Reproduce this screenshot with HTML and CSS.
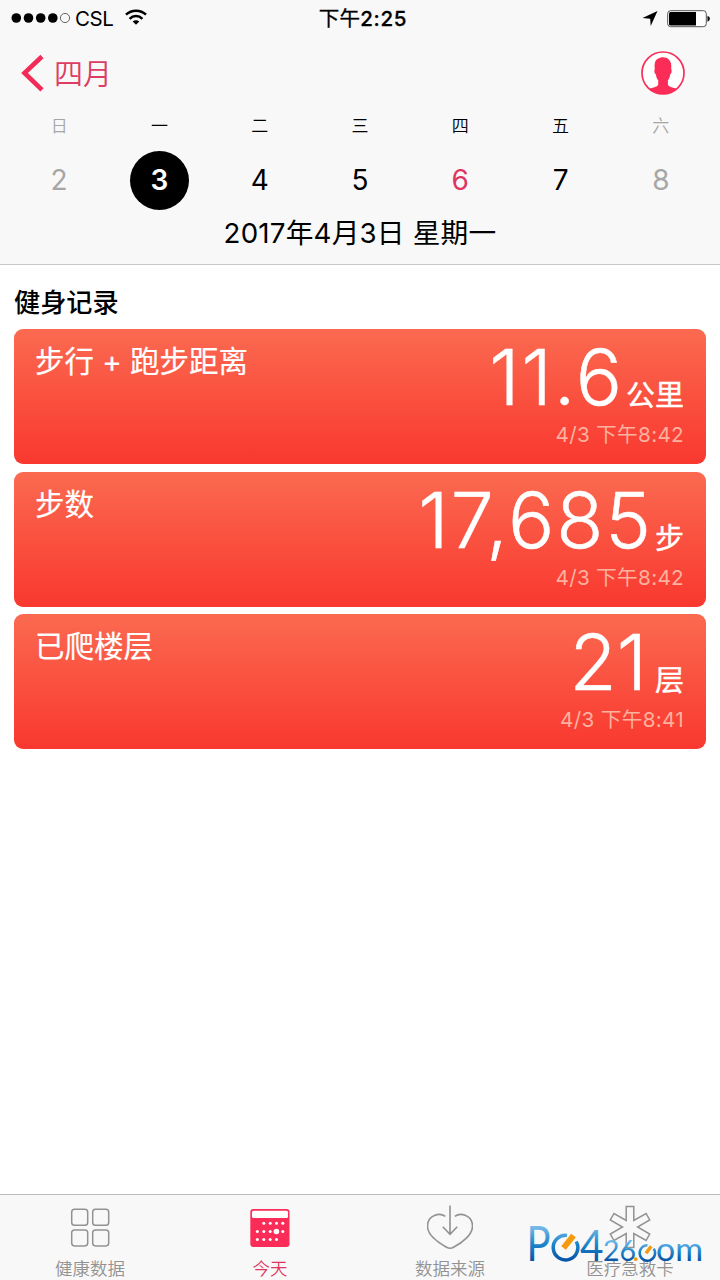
FILE: index.html
```html
<!DOCTYPE html>
<html lang="zh-CN">
<head>
<meta charset="utf-8">
<title>健康</title>
<link rel="stylesheet" href="styles.css">
</head>
<body>
<div class="screen">
  <header class="header">
    <div class="status">
      <div class="status-left">
        <svg class="signal" width="60" height="12" viewBox="0 0 60 12"><circle cx="5.3" cy="5" r="4.8"/><circle cx="17.5" cy="5" r="4.8"/><circle cx="29.7" cy="5" r="4.8"/><circle cx="41.8" cy="5" r="4.8"/><circle cx="54" cy="5" r="4.6" fill="none" stroke="#444" stroke-width=".8"/></svg>
        <span class="carrier">CSL</span>
        <svg class="wifi" width="22" height="17" viewBox="0 0 22 17" fill="none" stroke="#000" stroke-width="2.5"><path d="M1 5.7C6.5.3 15.500.3 21 5.700M4.600 9.800c3.600-3.600 9.200-3.600 12.800 0"/><path d="M11 15.700 7.700 12.400c1.800-1.700 4.800-1.700 6.600 0z" fill="#000" stroke="none"/></svg>
      </div>
      <span class="clock">下午<b>2:25</b></span>
      <div class="status-right">
        <svg width="16" height="16" viewBox="0 0 16 16"><path d="M15.500 0 8.700 15 8.200 7.800.5 7z"/></svg>
        <svg width="43" height="18" viewBox="0 0 43 18"><rect x=".7" y=".7" width="38.600" height="16" rx="3" fill="#fff" stroke="#555"/><path d="M3.500 2H29v13.500H3.500Q2 15.500 2 14V3.500Q2 2 3.500 2z"/><path d="M40.500 5.700q2.400 1 2.400 3t-2.400 3z"/></svg>
      </div>
    </div>
    <nav class="nav">
      <a class="back">
        <svg width="24" height="38" viewBox="0 0 24 38" fill="none" stroke="#f22b59" stroke-width="4.600"><path d="M22 2.500 4.500 19 22 35.800"/></svg>
        <span>四月</span>
      </a>
      <svg width="44" height="44" viewBox="0 0 44 44"><circle cx="22" cy="22" r="21" fill="#fff" stroke="#f62f59" stroke-width="1.700"/><path fill="#fb2d58" d="M8.200 38.300c2.500-2.100 8.200-1.800 9-4.800v-4.200c-1.500-1.600-2-3.700-2.300-6-1.600-.7-1.900-4.500-1.100-5.400-.9-6.500 1.200-10.300 4.400-10.700 3.200-1.900 13.500-1.700 12 10.700.9 1.100.4 4.700-1 5.400-.3 2.500-.9 4.500-2.300 6v4.200c.8 3 6.300 2.700 8.900 4.800Q30.500 43 22 43T8.200 38.300z"/></svg>
    </nav>
    <div class="week names">
      <span class="dim">日</span><span>一</span><span>二</span><span>三</span><span>四</span><span>五</span><span class="dim">六</span>
    </div>
    <div class="week days">
      <span class="dim">2</span><span class="selected">3</span><span>4</span><span>5</span><span class="today">6</span><span>7</span><span class="dim">8</span>
    </div>
    <div class="date">2017年4月3日 星期一</div>
  </header>

  <main class="content">
    <h1 class="title">健身记录</h1>
    <section class="card">
      <h2 class="label">步行 + 跑步距离</h2>
      <div class="reading">
        <div class="amount"><span class="value">11.6</span><span class="unit">公里</span></div>
        <div class="time">4/3 下午8:42</div>
      </div>
    </section>
    <section class="card">
      <h2 class="label">步数</h2>
      <div class="reading">
        <div class="amount"><span class="value">17,685</span><span class="unit">步</span></div>
        <div class="time">4/3 下午8:42</div>
      </div>
    </section>
    <section class="card">
      <h2 class="label">已爬楼层</h2>
      <div class="reading">
        <div class="amount"><span class="value tight">21</span><span class="unit">层</span></div>
        <div class="time">4/3 下午8:41</div>
      </div>
    </section>
  </main>

  <footer class="tabs">
    <a class="tab">
      <svg width="46" height="46" viewBox="0 0 46 46" fill="none" stroke="#929292" stroke-width="1.500"><rect x="4.700" y="5.200" width="16" height="16" rx="2.800"/><rect x="25.700" y="5.200" width="16" height="16" rx="2.800"/><rect x="4.700" y="25.900" width="16" height="16" rx="2.800"/><rect x="25.700" y="25.900" width="16" height="16" rx="2.800"/></svg>
      <span>健康数据</span>
    </a>
    <a class="tab active">
      <svg width="46" height="46" viewBox="0 0 46 46"><rect x="3.300" y="5" width="39.200" height="38" rx="3" fill="#fb2d58"/><rect x="5" y="6.700" width="36" height="7.400" rx="1.500" fill="#fff"/><g fill="#fff"><circle cx="16.800" cy="19.300" r="1.500"/><circle cx="23.200" cy="19.300" r="1.500"/><circle cx="29.500" cy="19.300" r="1.500"/><circle cx="35.800" cy="19.300" r="1.500"/><circle cx="10.300" cy="27.500" r="1.500"/><circle cx="16.800" cy="27.500" r="1.500"/><circle cx="23.200" cy="27.500" r="1.500"/><circle cx="29.400" cy="27.500" r="2.800"/><circle cx="35.800" cy="27.500" r="1.500"/><circle cx="10.300" cy="35.500" r="1.500"/><circle cx="16.800" cy="35.500" r="1.500"/><circle cx="23.200" cy="35.500" r="1.500"/><circle cx="29.500" cy="35.500" r="1.500"/></g></svg>
      <span>今天</span>
    </a>
    <a class="tab">
      <svg width="46" height="46" viewBox="0 0 46 46" fill="none" stroke="#929292" stroke-width="1.600"><path d="M18.300 12.300C13 8.500.5 10.500.5 22.300.5 30.500 11 38.500 19.500 43.200q3.700 2 7 0C35.500 38.500 45.500 30.500 45.500 22.300c0-11.800-12.300-13.800-17.700-10M23 1.500v29M15.800 22.700l7.200 7.600 7.200-7.600"/></svg>
      <span>数据来源</span>
    </a>
    <a class="tab">
      <svg width="46" height="46" viewBox="0 0 46 46" fill="none" stroke="#929292" stroke-width="1.500"><path d="M19.200 2.500h7.600v14l12.300-7 3.600 6.500-12.100 7 12.100 7-3.600 6.500-12.300-7v14h-7.600v-14l-12.200 7-3.700-6.500 12.200-7-12.200-7L7 9.500l12.200 7z"/></svg>
      <span>医疗急救卡</span>
    </a>
    <svg class="watermark" width="180" height="44" viewBox="526 1222 180 44">
      <defs>
        <linearGradient id="tall" gradientUnits="userSpaceOnUse" x1="0" y1="1226" x2="0" y2="1261"><stop stop-color="#7dbce9"/><stop offset=".5" stop-color="#1d87cb"/><stop offset="1" stop-color="#0752a5"/></linearGradient>
        <linearGradient id="short" gradientUnits="userSpaceOnUse" x1="0" y1="1241" x2="0" y2="1261"><stop stop-color="#6fb9ec"/><stop offset=".5" stop-color="#2387ca"/><stop offset="1" stop-color="#0752a5"/></linearGradient>
      </defs>
      <g fill="url(#tall)" class="mark-text">
        <text x="526.500" y="1261" font-size="48" textLength="24" lengthAdjust="spacingAndGlyphs">P</text>
        <text x="580" y="1261" font-size="43" textLength="23.500" lengthAdjust="spacingAndGlyphs">4</text>
      </g>
      <g fill="url(#short)" class="mark-text">
        <text x="603" y="1261" font-size="29" textLength="33" lengthAdjust="spacingAndGlyphs">26</text>
        <text x="656" y="1261" font-size="32" textLength="47" lengthAdjust="spacingAndGlyphs">om</text>
      </g>
      <text x="633" y="1261" font-size="24" fill="#f59a0c" class="mark-text dot">.</text>
      <path d="M567 1235.400a12.300 12.300 0 1 0 9.200 6.100" fill="none" stroke="url(#tall)" stroke-width="3.500"/>
      <path d="M563.500 1248l10-12.500" stroke="#f59a0c" stroke-width="6"/>
      <path d="M647.500 1245.300a7.700 7.700 0 1 0 6.200 3.300" fill="none" stroke="url(#short)" stroke-width="2.500"/>
      <path d="M646 1253.200l5.200-7" stroke="#f59a0c" stroke-width="3.500"/>
    </svg>
  </footer>
</div>
</body>
</html>
```
FILE: styles.css
```css
* { box-sizing: border-box; }
body { margin: 0; background: #fff; color: #000; font-family: Inter, "Noto Sans CJK SC", sans-serif; }
svg { display: block; flex: none; }
.screen { width: 720px; height: 1280px; display: flex; flex-direction: column; overflow: hidden; }

.header { height: 265px; background: #f8f8f8; border-bottom: 1px solid #c8c8c8; }
.status { height: 37px; display: grid; grid-template-columns: 1fr auto 1fr; align-items: center; padding: 1px 10px 0 11px; }
.status-left { display: flex; align-items: center; }
.carrier { width: 38px; margin-left: 4px; font-size: 20.500px; line-height: 36px; letter-spacing: -.4px; }
.wifi { margin-left: 12px; margin-top: -3px; }
.clock { font-size: 20.500px; line-height: 36px; font-weight: 400; letter-spacing: .2px; padding-left: 5px; -webkit-text-stroke: .3px #000; }
.clock b { font-weight: 500; letter-spacing: .7px; }
.status-right { display: flex; align-items: center; justify-content: flex-end; gap: 9px; }

.nav { height: 73px; display: flex; align-items: center; justify-content: space-between; padding: 0 35px 2px 20px; }
.back { display: flex; align-items: center; gap: 10px; color: #dd3c63; font-size: 29px; line-height: 40px; }
.back span { padding-top: 4px; font-weight: 350; }

.week { display: grid; grid-template-columns: repeat(7, 1fr); justify-items: center; align-items: center; padding: 0 9px; }
.names { height: 32px; font-size: 17px; line-height: 32px; font-weight: 350; }
.days { height: 76px; font-size: 28px; line-height: 59px; }
.dim { color: #a6a6a6; }
.today { color: #de3560; }
.selected { width: 59px; height: 59px; border-radius: 50%; background: #000; color: #fff; text-align: center; font-weight: 600; }
.date { height: 40px; margin-top: -5px; line-height: 40px; font-size: 27.700px; letter-spacing: .2px; font-weight: 370; text-align: center; }

.content { flex: 1; padding: 19px 14px 0; }
.title { margin: 0 0 9px; height: 36px; line-height: 38px; font-size: 26.200px; font-weight: 500; }
.card { height: 135px; margin-bottom: 7.500px; border-radius: 9px; padding: 0 22px 0 21px; display: flex; justify-content: space-between; color: #fff; background: linear-gradient(#fb6a50, #f9382f); }
.label { margin: 12px 0 0; height: 40px; line-height: 40px; font-size: 29.500px; font-weight: 400; -webkit-text-stroke: .2px #fff; }
.reading { text-align: right; }
.amount { height: 90px; line-height: 97px; white-space: nowrap; }
.value { font-size: 77px; font-weight: 300; letter-spacing: 2px; -webkit-text-stroke: .5px #fff; }
.value.tight { letter-spacing: 0; margin-right: 6px; }
.unit { display: inline-block; margin-left: 2px; font-size: 29px; line-height: 40px; font-weight: 400; -webkit-text-stroke: .4px #fff; vertical-align: -1px; }
.time { height: 30px; line-height: 32px; font-size: 20.700px; font-weight: 370; color: #fdb19f; letter-spacing: .3px; }

.tabs { position: relative; height: 86px; display: grid; grid-template-columns: repeat(4, 1fr); background: #f8f8f8; border-top: 1px solid #bcbcbc; }
.tab { display: flex; flex-direction: column; align-items: center; padding-top: 9px; font-size: 17.500px; line-height: 26px; color: #929292; font-weight: 350; }
.tab span { margin-top: 6px; }
.tab.active { color: #df365f; }
.watermark { position: absolute; left: 526px; top: 27px; overflow: visible; }
.mark-text { font-family: Lato, Inter, sans-serif; font-weight: 400; }
.dot { font-weight: 700; }
```
